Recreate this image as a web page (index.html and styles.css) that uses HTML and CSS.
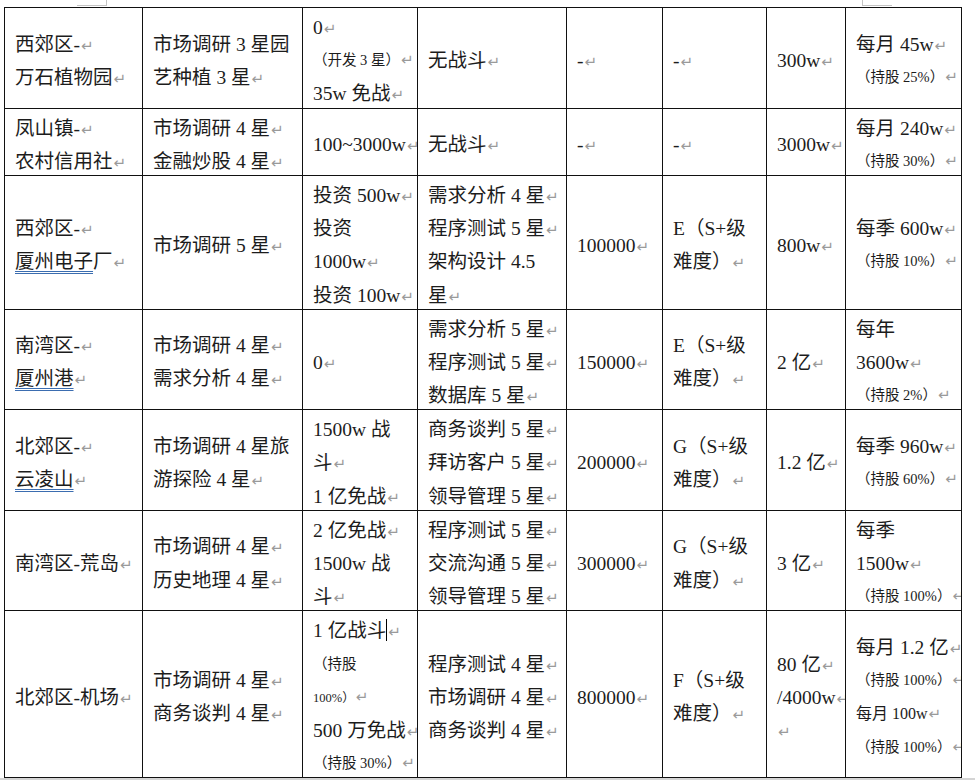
FILE: index.html
```html
<!DOCTYPE html>
<html lang="zh-CN">
<head>
<meta charset="utf-8">
<title>表格</title>
<link rel="stylesheet" href="styles.css">
</head>
<body>
<div class="page">
  <span class="corner corner-left"></span>
  <span class="corner corner-right"></span>
  <table class="grid">
    <colgroup>
      <col class="w1"><col class="w2"><col class="w3"><col class="w4"><col class="w5"><col class="w6"><col class="w7"><col class="w8">
    </colgroup>
    <tbody>
      <tr>
        <td><div class="c"><div class="l">西郊区-<span class="p">↵</span></div><div class="l">万石植物园<span class="p">↵</span></div></div></td>
        <td><div class="c"><div class="l">市场调研 3 星园</div><div class="l">艺种植 3 星<span class="p">↵</span></div></div></td>
        <td><div class="c"><div class="l">0<span class="p">↵</span></div><div class="l s">（开发 3 星）<span class="p">↵</span></div><div class="l">35w 免战<span class="p">↵</span></div></div></td>
        <td><div class="c"><div class="l">无战斗<span class="p">↵</span></div></div></td>
        <td><div class="c"><div class="l">-<span class="p">↵</span></div></div></td>
        <td><div class="c"><div class="l">-<span class="p">↵</span></div></div></td>
        <td><div class="c"><div class="l">300w<span class="p">↵</span></div></div></td>
        <td><div class="c"><div class="l">每月 45w<span class="p">↵</span></div><div class="l s">（持股 25%）<span class="p">↵</span></div></div></td>
      </tr>
      <tr>
        <td><div class="c"><div class="l">凤山镇-<span class="p">↵</span></div><div class="l">农村信用社<span class="p">↵</span></div></div></td>
        <td><div class="c"><div class="l">市场调研 4 星<span class="p">↵</span></div><div class="l">金融炒股 4 星<span class="p">↵</span></div></div></td>
        <td><div class="c"><div class="l">100~3000w<span class="p">↵</span></div></div></td>
        <td><div class="c"><div class="l">无战斗<span class="p">↵</span></div></div></td>
        <td><div class="c"><div class="l">-<span class="p">↵</span></div></div></td>
        <td><div class="c"><div class="l">-<span class="p">↵</span></div></div></td>
        <td><div class="c"><div class="l">3000w<span class="p">↵</span></div></div></td>
        <td><div class="c"><div class="l">每月 240w<span class="p">↵</span></div><div class="l s">（持股 30%）<span class="p">↵</span></div></div></td>
      </tr>
      <tr>
        <td><div class="c"><div class="l">西郊区-<span class="p">↵</span></div><div class="l"><span class="u">厦州电子</span>厂<span class="p">↵</span></div></div></td>
        <td><div class="c"><div class="l">市场调研 5 星<span class="p">↵</span></div></div></td>
        <td><div class="c"><div class="l">投资 500w<span class="p">↵</span></div><div class="l">投资</div><div class="l">1000w<span class="p">↵</span></div><div class="l">投资 100w<span class="p">↵</span></div></div></td>
        <td><div class="c"><div class="l">需求分析 4 星<span class="p">↵</span></div><div class="l">程序测试 5 星<span class="p">↵</span></div><div class="l">架构设计 4.5</div><div class="l">星<span class="p">↵</span></div></div></td>
        <td><div class="c"><div class="l">100000<span class="p">↵</span></div></div></td>
        <td><div class="c"><div class="l">E（S+级</div><div class="l">难度）<span class="p">↵</span></div></div></td>
        <td><div class="c"><div class="l">800w<span class="p">↵</span></div></div></td>
        <td><div class="c"><div class="l">每季 600w<span class="p">↵</span></div><div class="l s">（持股 10%）<span class="p">↵</span></div></div></td>
      </tr>
      <tr>
        <td><div class="c"><div class="l">南湾区-<span class="p">↵</span></div><div class="l"><span class="u">厦州港</span><span class="p">↵</span></div></div></td>
        <td><div class="c"><div class="l">市场调研 4 星<span class="p">↵</span></div><div class="l">需求分析 4 星<span class="p">↵</span></div></div></td>
        <td><div class="c"><div class="l">0<span class="p">↵</span></div></div></td>
        <td><div class="c"><div class="l">需求分析 5 星<span class="p">↵</span></div><div class="l">程序测试 5 星<span class="p">↵</span></div><div class="l">数据库 5 星<span class="p">↵</span></div></div></td>
        <td><div class="c"><div class="l">150000<span class="p">↵</span></div></div></td>
        <td><div class="c"><div class="l">E（S+级</div><div class="l">难度）<span class="p">↵</span></div></div></td>
        <td><div class="c"><div class="l">2 亿<span class="p">↵</span></div></div></td>
        <td><div class="c"><div class="l">每年</div><div class="l">3600w<span class="p">↵</span></div><div class="l s">（持股 2%）<span class="p">↵</span></div></div></td>
      </tr>
      <tr>
        <td><div class="c"><div class="l">北郊区-<span class="p">↵</span></div><div class="l"><span class="u">云凌山</span><span class="p">↵</span></div></div></td>
        <td><div class="c"><div class="l">市场调研 4 星旅</div><div class="l">游探险 4 星<span class="p">↵</span></div></div></td>
        <td><div class="c"><div class="l">1500w 战</div><div class="l">斗<span class="p">↵</span></div><div class="l">1 亿免战<span class="p">↵</span></div></div></td>
        <td><div class="c"><div class="l">商务谈判 5 星<span class="p">↵</span></div><div class="l">拜访客户 5 星<span class="p">↵</span></div><div class="l">领导管理 5 星<span class="p">↵</span></div></div></td>
        <td><div class="c"><div class="l">200000<span class="p">↵</span></div></div></td>
        <td><div class="c"><div class="l">G（S+级</div><div class="l">难度）<span class="p">↵</span></div></div></td>
        <td><div class="c"><div class="l">1.2 亿<span class="p">↵</span></div></div></td>
        <td><div class="c"><div class="l">每季 960w<span class="p">↵</span></div><div class="l s">（持股 60%）<span class="p">↵</span></div></div></td>
      </tr>
      <tr>
        <td><div class="c"><div class="l">南湾区-荒岛<span class="p">↵</span></div></div></td>
        <td><div class="c"><div class="l">市场调研 4 星<span class="p">↵</span></div><div class="l">历史地理 4 星<span class="p">↵</span></div></div></td>
        <td><div class="c"><div class="l">2 亿免战<span class="p">↵</span></div><div class="l">1500w 战</div><div class="l">斗<span class="p">↵</span></div></div></td>
        <td><div class="c"><div class="l">程序测试 5 星<span class="p">↵</span></div><div class="l">交流沟通 5 星<span class="p">↵</span></div><div class="l">领导管理 5 星<span class="p">↵</span></div></div></td>
        <td><div class="c"><div class="l">300000<span class="p">↵</span></div></div></td>
        <td><div class="c"><div class="l">G（S+级</div><div class="l">难度）<span class="p">↵</span></div></div></td>
        <td><div class="c"><div class="l">3 亿<span class="p">↵</span></div></div></td>
        <td><div class="c"><div class="l">每季</div><div class="l">1500w<span class="p">↵</span></div><div class="l s">（持股 100%）<span class="p">↵</span></div></div></td>
      </tr>
      <tr>
        <td><div class="c"><div class="l">北郊区-机场<span class="p">↵</span></div></div></td>
        <td><div class="c"><div class="l">市场调研 4 星<span class="p">↵</span></div><div class="l">商务谈判 4 星<span class="p">↵</span></div></div></td>
        <td><div class="c"><div class="l">1 亿战斗<span class="caret"></span><span class="p">↵</span></div><div class="l s">（持股</div><div class="l xs">100%）<span class="p">↵</span></div><div class="l">500 万免战<span class="p">↵</span></div><div class="l s">（持股 30%）<span class="p">↵</span></div></div></td>
        <td><div class="c"><div class="l">程序测试 4 星<span class="p">↵</span></div><div class="l">市场调研 4 星<span class="p">↵</span></div><div class="l">商务谈判 4 星<span class="p">↵</span></div></div></td>
        <td><div class="c"><div class="l">800000<span class="p">↵</span></div></div></td>
        <td><div class="c"><div class="l">F（S+级</div><div class="l">难度）<span class="p">↵</span></div></div></td>
        <td><div class="c"><div class="l">80 亿<span class="p">↵</span></div><div class="l">/4000w<span class="p">↵</span></div><div class="l"><span class="p">↵</span></div></div></td>
        <td><div class="c"><div class="l">每月 1.2 亿<span class="p">↵</span></div><div class="l s">（持股 100%）<span class="p">↵</span></div><div class="l m">每月 100w<span class="p">↵</span></div><div class="l s">（持股 100%）<span class="p">↵</span></div></div></td>
      </tr>
    </tbody>
  </table>
  <div class="edge"></div>
</div>
</body>
</html>
```
FILE: styles.css
```css
html, body {
  margin: 0;
  padding: 0;
  background: #ffffff;
}

.page {
  position: relative;
  width: 975px;
  height: 780px;
  overflow: hidden;
  padding-top: 7px;
  box-sizing: border-box;
}

.corner {
  position: absolute;
  top: 0;
  width: 29px;
  height: 5px;
  border-bottom: 1px solid #c4c4c4;
}
.corner-left {
  left: 77px;
  border-right: 1px solid #c4c4c4;
}
.corner-right {
  left: 862px;
  border-left: 1px solid #c4c4c4;
}

.grid {
  margin-left: 4px;
  width: 957px;
  border-collapse: collapse;
  table-layout: fixed;
  font-family: "Liberation Serif", "Noto Sans CJK SC", serif;
  font-size: 19.5px;
  color: #1c1c1c;
}

.w1 { width: 138px; }
.w2 { width: 160px; }
.w3 { width: 115px; }
.w4 { width: 149px; }
.w5 { width: 96px; }
.w6 { width: 104px; }
.w7 { width: 79px; }
.w8 { width: 116px; }

.grid td {
  border: 1px solid #111111;
  padding: 0 0 0 10px;
  vertical-align: middle;
  line-height: 33px;
  overflow: hidden;
}

.c {
  margin: 3px 0 -3px;
}

.l {
  white-space: nowrap;
  height: 33.2px;
}

.s {
  font-size: 14.5px;
}

.xs {
  font-size: 12.5px;
}

.m {
  font-size: 16px;
}

.p {
  font-family: "DejaVu Sans", sans-serif;
  font-size: 15px;
  color: #9a9a9a;
  margin-left: 1px;
}

.u {
  text-decoration: underline double #3b6db0;
  text-decoration-thickness: 1px;
  text-underline-offset: 3px;
}

.caret {
  display: inline-block;
  width: 0;
  height: 22px;
  border-left: 1px solid #000000;
  vertical-align: -4px;
}

.edge {
  height: 3px;
  background: #d4d4d4;
}
```
